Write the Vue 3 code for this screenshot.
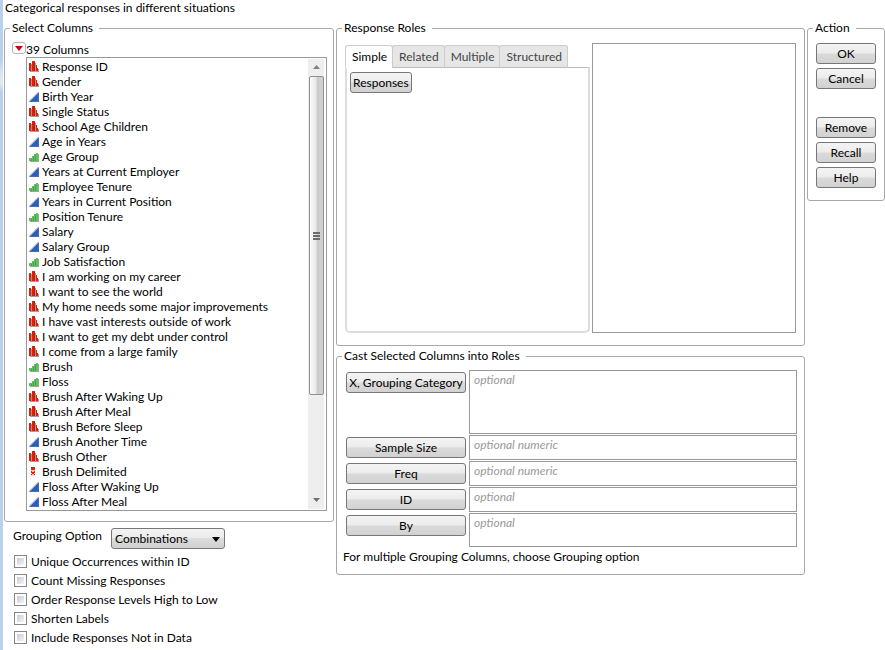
<script setup>
import { ref } from 'vue'

const columns = [
  ['nominal', 'Response ID'],
  ['nominal', 'Gender'],
  ['continuous', 'Birth Year'],
  ['nominal', 'Single Status'],
  ['nominal', 'School Age Children'],
  ['continuous', 'Age in Years'],
  ['ordinal', 'Age Group'],
  ['continuous', 'Years at Current Employer'],
  ['ordinal', 'Employee Tenure'],
  ['continuous', 'Years in Current Position'],
  ['ordinal', 'Position Tenure'],
  ['continuous', 'Salary'],
  ['continuous', 'Salary Group'],
  ['ordinal', 'Job Satisfaction'],
  ['nominal', 'I am working on my career'],
  ['nominal', 'I want to see the world'],
  ['nominal', 'My home needs some major improvements'],
  ['nominal', 'I have vast interests outside of work'],
  ['nominal', 'I want to get my debt under control'],
  ['nominal', 'I come from a large family'],
  ['ordinal', 'Brush'],
  ['ordinal', 'Floss'],
  ['nominal', 'Brush After Waking Up'],
  ['nominal', 'Brush After Meal'],
  ['nominal', 'Brush Before Sleep'],
  ['continuous', 'Brush Another Time'],
  ['nominal', 'Brush Other'],
  ['multiple', 'Brush Delimited'],
  ['continuous', 'Floss After Waking Up'],
  ['continuous', 'Floss After Meal'],
]

const options = [
  'Unique Occurrences within ID',
  'Count Missing Responses',
  'Order Response Levels High to Low',
  'Shorten Labels',
  'Include Responses Not in Data',
]

const tabs = ['Simple', 'Related', 'Multiple', 'Structured']
const activeTab = ref('Simple')

const roles = [
  { id: 'x', label: 'X, Grouping Category', hint: 'optional', size: 'tall' },
  { id: 'size', label: 'Sample Size', hint: 'optional numeric', size: 'short' },
  { id: 'freq', label: 'Freq', hint: 'optional numeric', size: 'short' },
  { id: 'ident', label: 'ID', hint: 'optional', size: 'short' },
  { id: 'by', label: 'By', hint: 'optional', size: 'medium' },
]
</script>

<template>
  <main class="dialog">
    <p class="title">Categorical responses in different situations</p>
    <div class="layout">
      <div class="left">
        <fieldset class="group columns-group">
          <legend>Select Columns</legend>
          <div class="columns-head">
            <button type="button" class="hotspot" aria-label="Column options">
              <svg width="8" height="5" viewBox="0 0 8 5"><path d="M0 0h8L4 5z" fill="#c8060c" /></svg>
            </button>
            <span>39 Columns</span>
          </div>
          <div class="list">
            <ul>
              <li v-for="[kind, name] in columns" :key="name">
                <svg class="kind" width="11" height="12" viewBox="0 0 11 12" aria-hidden="true">
                  <template v-if="kind === 'nominal'">
                    <path d="M1 10h9v1H1zM9 8h1v3H9z" fill="#a89a96" />
                    <path d="M2 3h1v7H2zM6 2h1v8H6z" fill="#c58a80" />
                    <path d="M0 2h2v8H0zM3 0h3v10H3zM7 4h1v6H7zM8 7h1v3H8z" fill="#d9200c" />
                    <path d="M5 1h1v9H5z" fill="#b5200f" />
                  </template>
                  <template v-else-if="kind === 'continuous'">
                    <path d="M10 1v10H0z" fill="#2b5fb8" />
                    <path d="M0 10.500L9.500 1" stroke="#86a9dc" stroke-width="1" />
                    <path d="M9.500 2v8.500H1" fill="none" stroke="#4a6ca8" stroke-width="1" />
                  </template>
                  <template v-else-if="kind === 'ordinal'">
                    <path d="M1 10h9v1H1zM9 3h1v8H9z" fill="#9aa59a" />
                    <path d="M0 7h3V5h2V3h2V2h2v8H0z" fill="#5cc25c" />
                    <path d="M2 8h1v2H2zM4 6h1v4H4zM6 4h1v6H6z" fill="#46a448" />
                  </template>
                  <template v-else>
                    <path d="M2 1h4v4H2zM2 5h4v5H2z" fill="#f6c9c3" />
                    <path d="M2 1h4v3H2zM2 5h1v1h2V5h1v2H5v1h1v1H5V8H3v1H2V8h1V7H2z" fill="#e0220f" />
                    <path d="M3 6h2v2H3z" fill="#e0220f" />
                  </template>
                </svg>
                <span>{{ name }}</span>
              </li>
            </ul>
            <div class="scrollbar" aria-hidden="true">
              <svg class="arrow" width="7" height="4" viewBox="0 0 7 4"><path d="M0 4L3.500 0L7 4z" fill="#808080" /></svg>
              <div class="thumb"><i></i><i></i><i></i></div>
              <svg class="arrow low" width="7" height="4" viewBox="0 0 7 4"><path d="M0 0h7L3.500 4z" fill="#707070" /></svg>
            </div>
          </div>
        </fieldset>

        <div class="options">
          <div class="grouping">
            <label for="grouping">Grouping Option</label>
            <span class="select-wrap">
              <select id="grouping">
                <option>Combinations</option>
                <option>Each Individually</option>
              </select>
              <svg class="caret" width="8" height="5" viewBox="0 0 8 5"><path d="M0 0h8L4 5z" fill="#000" /></svg>
            </span>
          </div>
          <label v-for="o in options" :key="o" class="check">
            <input type="checkbox" /><span>{{ o }}</span>
          </label>
        </div>
      </div>

      <div class="middle">
        <fieldset class="group roles">
          <legend>Response Roles</legend>
          <div class="roles-body">
            <div class="tabbox">
              <div class="tabs" role="tablist">
                <button
                  v-for="t in tabs"
                  :key="t"
                  type="button"
                  role="tab"
                  class="tab"
                  :class="{ active: t === activeTab }"
                  :aria-selected="t === activeTab"
                  @click="activeTab = t"
                >{{ t }}</button>
              </div>
              <div class="panel" role="tabpanel">
                <button type="button" class="btn">Responses</button>
              </div>
            </div>
            <div class="picked"></div>
          </div>
        </fieldset>

        <fieldset class="group cast">
          <legend>Cast Selected Columns into Roles</legend>
          <div v-for="r in roles" :key="r.id" class="role">
            <button :id="'role-' + r.id" type="button" class="btn">{{ r.label }}</button>
            <textarea :class="r.size" :placeholder="r.hint" :aria-labelledby="'role-' + r.id"></textarea>
          </div>
          <p class="note">For multiple Grouping Columns, choose Grouping option</p>
        </fieldset>
      </div>

      <fieldset class="group action">
        <legend>Action</legend>
        <div class="stack">
          <button type="button" class="btn">OK</button>
          <button type="button" class="btn">Cancel</button>
        </div>
        <div class="stack">
          <button type="button" class="btn">Remove</button>
          <button type="button" class="btn">Recall</button>
          <button type="button" class="btn">Help</button>
        </div>
      </fieldset>
    </div>
  </main>
</template>

<style>
body {
  background: #fff;
}
</style>

<style scoped>
* {
  box-sizing: border-box;
}
.dialog {
  min-height: 100vh;
  padding-left: 4px;
  font-family: Lato, "Open Sans", sans-serif;
  font-size: 12px;
  line-height: 16px;
  color: #000;
  background: linear-gradient(#b9d1ea, #b9d1ea 60px, #dbe8f5 75px, #dbe8f5 84px, #b9d1ea 92px) 0 0 / 3px 100% no-repeat #fff;
}
button,
select,
textarea {
  font: inherit;
  color: inherit;
}
p,
ul {
  margin: 0;
  padding: 0;
}
.title {
  height: 20px;
  padding-left: 1px;
  line-height: 15px;
}
.layout {
  display: grid;
  grid-template-columns: 330px minmax(0, 1fr) 78px;
  gap: 2px;
  align-items: start;
}
.group {
  min-width: 0;
  margin: 0;
  border: 1px solid #a8a8a8;
  border-radius: 3px;
}
legend {
  margin-left: -3px;
  padding: 0 6px 0 2px;
}

.columns-group {
  padding: 6px 6px 10px 7px;
}
.columns-group legend {
  margin-left: -2px;
}
.columns-head {
  display: flex;
  height: 15px;
}
.hotspot {
  display: flex;
  align-items: center;
  justify-content: center;
  width: 14px;
  height: 12px;
  padding: 0;
  border: 1px solid #b4b4b4;
  border-radius: 3px;
  background: #fff;
}
.list {
  display: flex;
  justify-content: space-between;
  margin-left: 14px;
  padding: 1px 2px;
  border: 1px solid #999;
}
ul {
  list-style: none;
}
li {
  display: flex;
  align-items: center;
  gap: 2px;
  height: 15px;
  line-height: 15px;
  white-space: nowrap;
}
.kind {
  flex: none;
}
.scrollbar {
  display: flex;
  flex-direction: column;
  align-items: center;
  width: 16px;
  background: #eee;
}
.arrow {
  margin: 6px 0 7px;
}
.arrow.low {
  margin: auto 0 7px;
}
.thumb {
  display: flex;
  flex-direction: column;
  align-items: center;
  justify-content: center;
  gap: 1px;
  width: 15px;
  height: 319px;
  border: 1px solid #909090;
  border-radius: 2px;
  background: linear-gradient(90deg, #fafafa, #eaeaec 45%, #cbcbce 55%, #d2d2d6);
}
.thumb i {
  width: 7px;
  height: 2px;
  background: #6c6c6c;
}

.options {
  padding: 6px 9px;
}
.grouping {
  display: flex;
  align-items: flex-start;
  justify-content: flex-start;
  height: 24px;
}
.grouping label {
  width: 98px;
  line-height: 15px;
  white-space: nowrap;
}
.select-wrap {
  position: relative;
}
select {
  appearance: none;
  width: 114px;
  height: 21px;
  padding: 0 20px 0 3px;
  border: 1px solid #777;
  border-radius: 3px;
  background: linear-gradient(#f3f3f3, #ebebeb 50%, #dcdcdc 50%, #d0d0d0);
}
.caret {
  position: absolute;
  right: 5px;
  top: 9px;
  pointer-events: none;
}
.check {
  display: flex;
  align-items: center;
  gap: 4px;
  height: 19px;
}
.check input {
  appearance: none;
  flex: none;
  width: 13px;
  height: 13px;
  margin: 0 0 0 1px;
  padding: 2px;
  border: 1px solid #858686;
  background: linear-gradient(135deg, #c8ccd1, #f4f4f4) content-box #f4f4f4;
}
.check input:checked {
  background: #333 content-box;
}

.middle {
  display: flex;
  flex-direction: column;
  gap: 2px;
}
.roles {
  padding: 7px 8px 12px;
}
.roles-body {
  display: grid;
  grid-template-columns: minmax(0, 245fr) minmax(0, 204fr);
  gap: 2px;
  min-height: 290px;
}
.tabbox {
  display: flex;
  flex-direction: column;
  padding-top: 2px;
}
.tabs {
  display: flex;
  position: relative;
  z-index: 1;
}
.tab {
  height: 23px;
  margin-left: -1px;
  padding: 0 5px 0 6px;
  border: 1px solid #ccc;
  border-bottom-color: #bbb;
  border-radius: 3px 3px 0 0;
  background: #e6e6e6;
  color: #444;
}
.tab:first-child {
  margin-left: 0;
}
.tab.active {
  border-bottom-color: #fff;
  background: #fff;
  color: #000;
}
.panel {
  flex: 1;
  margin-top: -1px;
  padding: 4px 3px;
  border: 2px solid #ddd;
  border-top: 1px solid #bbb;
  border-radius: 0 0 5px 5px;
}
.picked {
  border: 1px solid #999;
}
.btn {
  display: block;
  height: 21px;
  padding: 0 2px;
  border: 1px solid #777;
  border-radius: 3px;
  background: linear-gradient(#f4f4f4, #ececec 48%, #dadada 52%, #d2d2d2);
  white-space: nowrap;
  line-height: 19px;
}

.cast {
  padding: 6px 7px 9px 9px;
}
.cast legend {
  margin-left: -4px;
}
.role {
  display: grid;
  grid-template-columns: 120px minmax(0, 1fr);
  gap: 3px;
  margin-bottom: 1px;
}
.role .btn {
  margin-top: 2px;
}
textarea {
  display: block;
  width: 100%;
  padding: 1px 4px;
  border: 1px solid #999;
  border-radius: 0;
  background: #fff;
  resize: none;
  overflow: hidden;
}
textarea::placeholder {
  color: #999;
  font-style: italic;
  opacity: 1;
}
.tall {
  height: 64px;
}
.short {
  height: 25px;
}
.medium {
  height: 34px;
}
.note {
  margin-left: -3px;
  padding-top: 1px;
}

.action {
  padding: 7px 8px 12px;
}
.stack {
  display: grid;
  gap: 4px;
}
.stack + .stack {
  margin-top: 28px;
}
</style>
